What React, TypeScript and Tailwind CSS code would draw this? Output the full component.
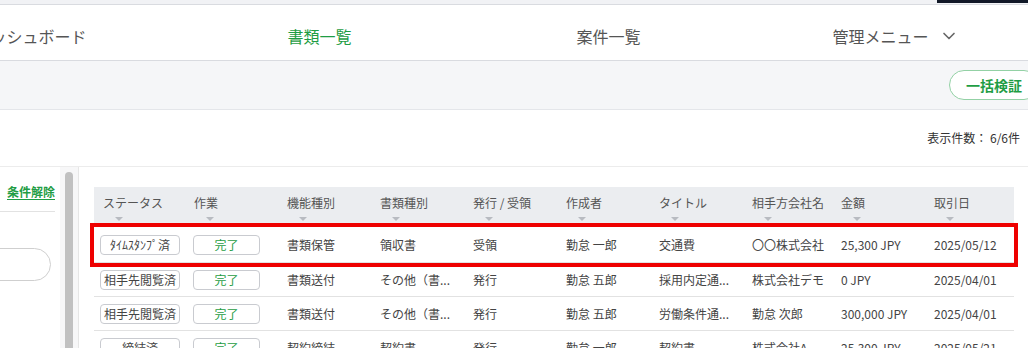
import { ChevronDown } from 'lucide-react';

type Row = {
    status: string;
    kind: string;
    docType: string;
    direction: string;
    author: string;
    title: string;
    partner: string;
    amount: string;
    date: string;
};

const rows: Row[] = [
    { status: 'ﾀｲﾑｽﾀﾝﾌﾟ済', kind: '書類保管', docType: '領収書', direction: '受領', author: '勤怠 一郎', title: '交通費', partner: '〇〇株式会社', amount: '25,300 JPY', date: '2025/05/12' },
    { status: '相手先閲覧済', kind: '書類送付', docType: 'その他（書...', direction: '発行', author: '勤怠 五郎', title: '採用内定通...', partner: '株式会社デモ', amount: '0 JPY', date: '2025/04/01' },
    { status: '相手先閲覧済', kind: '書類送付', docType: 'その他（書...', direction: '発行', author: '勤怠 五郎', title: '労働条件通...', partner: '勤怠 次郎', amount: '300,000 JPY', date: '2025/04/01' },
    { status: '締結済', kind: '契約締結', docType: '契約書', direction: '発行', author: '勤怠 一郎', title: '契約書', partner: '株式会社A', amount: '25,300 JPY', date: '2025/05/21' },
];

const headers = ['ステータス', '作業', '機能種別', '書類種別', '発行 / 受領', '作成者', 'タイトル', '相手方会社名', '金額', '取引日'];

const cols = 'grid grid-cols-[93px_93px_93px_93px_93px_93px_93px_91px_91px_1fr]';

const navItems = [
    { label: 'ダッシュボード', active: false },
    { label: '書類一覧', active: true },
    { label: '案件一覧', active: false },
];

function SortMark() {
    return <div className="mt-[6px] ml-[12px] w-0 h-0 border-l-[4px] border-r-[4px] border-t-[4px] border-l-transparent border-r-transparent border-t-[#b8bbc1]" />;
}

export default function App() {
    return (
        <div className="w-[1028px] h-[348px] overflow-hidden bg-white text-[#444] font-['Noto_Sans_CJK_JP','Noto_Sans',sans-serif]">
            {/* top strip */}
            <div className="h-[5px] bg-[#f1f2f5] border-b border-[#d9dbe0] flex justify-end">
                <div className="w-[91px] h-[3px] bg-[#111827]" />
            </div>

            {/* nav */}
            <div className="h-[56px] border-b border-[#d9dbe0] flex items-center pt-[7px] -ml-[114px]">
                {navItems.map((item) => (
                    <div key={item.label} className="w-[289px] shrink-0 flex justify-center">
                        <span className={`text-[16px] ${item.active ? 'text-[#1f9d45]' : 'text-[#555]'}`}>{item.label}</span>
                    </div>
                ))}
                <div className="w-[289px] shrink-0 -ml-[2px] flex justify-center items-center gap-[10px]">
                    <span className="text-[16px] text-[#555]">管理メニュー</span>
                    <ChevronDown size={20} strokeWidth={2} className="text-[#666]" />
                </div>
            </div>

            {/* action band */}
            <div className="h-[49px] bg-[#f5f6f8] border-b border-[#e4e6ea] flex items-center justify-end -mr-[11px]">
                <button className="h-[30px] px-[16px] rounded-full border border-[#93d1a5] bg-white text-[14px] font-bold text-[#1f9d45] leading-none">
                    一括検証
                </button>
            </div>

            {/* count */}
            <div className="h-[57px] border-b border-[#ececec] flex items-center justify-end pr-[8px]">
                <span className="text-[12px] text-[#333]">表示件数： 6/6件</span>
            </div>

            <div className="flex">
                {/* filter panel */}
                <div className="w-[60px] shrink-0 overflow-hidden pr-[5px]">
                    <div className="h-[45px] border-b border-[#e2e2e2] flex items-center justify-end pt-[5px]">
                        <span className="text-[12px] font-bold text-[#1f9d45] underline underline-offset-2">条件解除</span>
                    </div>
                    <div className="mt-[36px] -ml-[40px] w-[91px] h-[33px] rounded-full border border-[#cfcfcf]" />
                </div>

                {/* scrollbar */}
                <div className="w-[19px] shrink-0 bg-[#f7f7f8] border-r border-[#e6e6e6] flex justify-center pt-[5px] h-[200px]">
                    <div className="w-[8px] h-[200px] rounded-full bg-[#c1c1c1]" />
                </div>

                {/* table */}
                <div className="pl-[15px] pt-[20px] w-[935px]">
                    <div className="w-[920px] text-[12px]">
                        <div className={`${cols} h-[40px] bg-[#ebedf0] text-[#555]`}>
                            {headers.map((h, i) => (
                                <div key={h} className={`pt-[8px] ${i === 0 ? 'pl-[9px]' : i === 8 ? 'pl-[5px]' : 'pl-[7px]'}`}>
                                    <div className="leading-[16px] whitespace-nowrap">{h}</div>
                                    <SortMark />
                                </div>
                            ))}
                        </div>
                        {rows.map((r, i) => (
                            <div
                                key={i}
                                className={`${cols} items-center border-b border-[#e2e2e2] ${i === 0 ? 'h-[36px] outline-4 outline-[#ee0000]' : 'h-[34px]'}`}
                            >
                                <div className="pl-[6px]">
                                    <div className="w-[80px] h-[20px] rounded-[4px] border border-[#c9cbd0] flex items-center justify-center text-[12px] text-[#444] whitespace-nowrap">
                                        {r.status}
                                    </div>
                                </div>
                                <div className="pl-[6px]">
                                    <div className="w-[67px] h-[20px] rounded-[4px] border border-[#c9cbd0] flex items-center justify-center text-[12px] text-[#1f9d45]">
                                        完了
                                    </div>
                                </div>
                                <div className="pl-[7px] whitespace-nowrap">{r.kind}</div>
                                <div className="pl-[7px] whitespace-nowrap">{r.docType}</div>
                                <div className="pl-[7px] whitespace-nowrap">{r.direction}</div>
                                <div className="pl-[7px] whitespace-nowrap">{r.author}</div>
                                <div className="pl-[7px] whitespace-nowrap">{r.title}</div>
                                <div className="pl-[7px] whitespace-nowrap">{r.partner}</div>
                                <div className="pl-[5px] whitespace-nowrap">{r.amount}</div>
                                <div className="pl-[7px] whitespace-nowrap">{r.date}</div>
                            </div>
                        ))}
                    </div>
                </div>
            </div>
        </div>
    );
}
